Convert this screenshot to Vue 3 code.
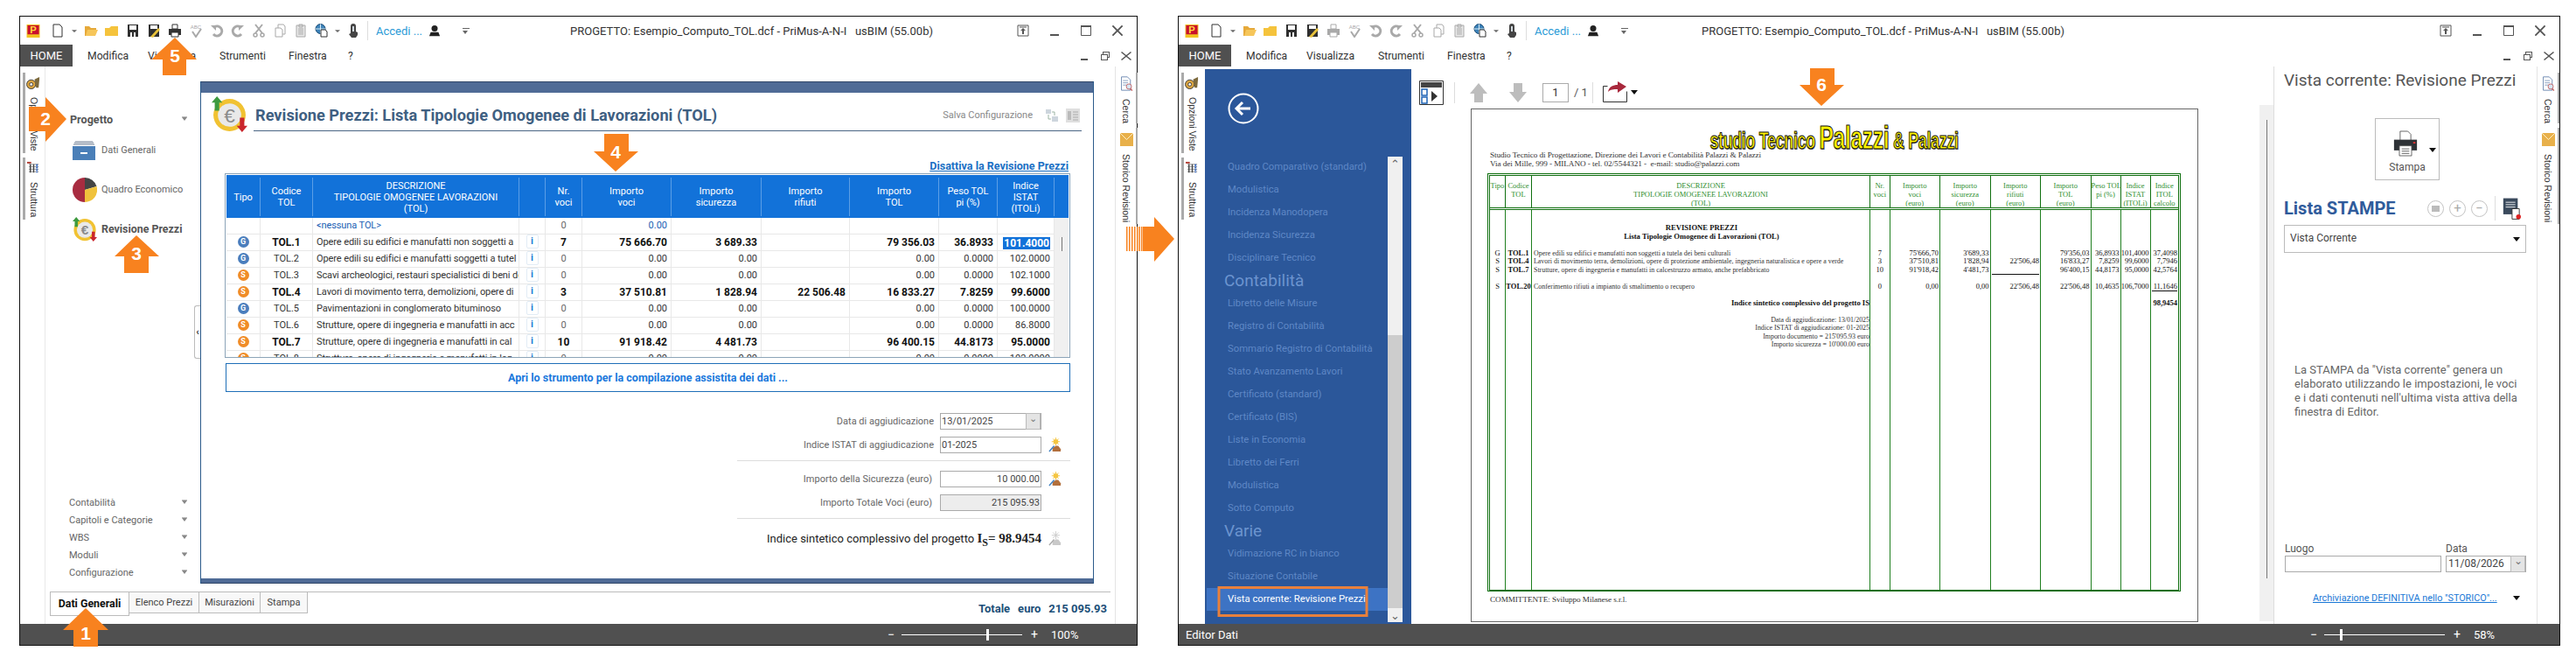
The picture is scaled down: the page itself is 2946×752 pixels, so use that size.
<script setup>
// Due finestre PriMus affiancate: la cornice e' comune, il corpo cambia
const windows = [
  { id: 'left', titleLeft: 629, status: '', zoom: '100%', thumb: 70, printMuted: false },
  { id: 'right', titleLeft: 598, status: 'Editor Dati', zoom: '58%', thumb: 13, printMuted: true }
]

const menu = [
  { label: 'Modifica', w: 69 },
  { label: 'Visualizza', w: 82 },
  { label: 'Strumenti', w: 79 },
  { label: 'Finestra', w: 68 },
  { label: '?', w: 12 }
]

const grey = '#a9a9a9'
const tools = [
  { id: 'doc', w: 32, shapes: [{ d: 'M3 1h7l3 3v11H3z', fill: '#fff', stroke: '#333' }] },
  { id: 'drop1', w: 6, small: true, shapes: [{ d: 'M0 6h16l-8 7z', fill: '#666' }] },
  { id: 'open', w: 24, gap: 4, shapes: [{ d: 'M1 3h5l2 2h6v2H5l-2 7H1z', fill: '#e6a93a' }, { d: 'M4 7h12l-3 7H2z', fill: '#f6c65a' }] },
  { id: 'folder', w: 24, shapes: [{ d: 'M0 5h5l2-2h8v11H0z', fill: '#f5c33c' }] },
  { id: 'save', w: 24, shapes: [{ d: 'M2 1h12v14H2z', fill: '#2f2f2f' }, { d: 'M4 2h8v5H4z', fill: '#fff' }, { d: 'M5 10h2v5H5zM9 10h2v5H9z', fill: '#fff' }] },
  { id: 'saveas', w: 24, shapes: [{ d: 'M2 1h12v14H2z', fill: '#2f2f2f' }, { d: 'M4 2h8v4H4z', fill: '#fff' }, { d: 'M4 15l9-10 2 2-8 9z', fill: '#e8c23a' }] },
  { id: 'print', w: 24, print: true, shapes: [{ d: 'M5 1h6v5H5z', fill: '#fff', stroke: 'currentColor' }, { d: 'M1 6h14v7H1z', fill: 'currentColor' }, { d: 'M4 10h8v5H4z', fill: '#fff', stroke: 'currentColor' }] },
  { id: 'abc', w: 24, label: 'ABC', shapes: [{ d: 'M4 9l4 6 6-9', fill: 'none', stroke: grey, sw: 2 }] },
  { id: 'undo', w: 24, shapes: [{ d: 'M5 4a5.5 5.5 0 1 1-1 8', fill: 'none', stroke: grey, sw: 3 }, { d: 'M1 2h6v6z', fill: grey }] },
  { id: 'redo', w: 24, shapes: [{ d: 'M11 4a5.5 5.5 0 1 0 1 8', fill: 'none', stroke: grey, sw: 3 }, { d: 'M15 2H9v6z', fill: grey }] },
  { id: 'cut', w: 24, shapes: [{ d: 'M4 1l8 10M12 1L4 11', fill: 'none', stroke: grey, sw: 2 }, { d: 'M2 13a2 2 0 1 0 4 0 2 2 0 1 0-4 0M10 13a2 2 0 1 0 4 0 2 2 0 1 0-4 0', fill: 'none', stroke: grey, sw: 1.5 }] },
  { id: 'copy', w: 24, shapes: [{ d: 'M6 1h6l2 2v9H6z', fill: '#fff', stroke: grey }, { d: 'M3 5h6l2 2v8H3z', fill: '#fff', stroke: grey }] },
  { id: 'paste', w: 24, shapes: [{ d: 'M3 2h10v13H3z', fill: '#e8e8e8', stroke: grey }, { d: 'M6 1h4v3H6zM5 6h6M5 8h6M5 10h6M5 12h6', fill: 'none', stroke: grey }] },
  { id: 'web', w: 24, shapes: [{ d: 'M1 6a5.5 5.5 0 1 0 11 0 5.5 5.5 0 1 0-11 0z', fill: '#3d82b8', stroke: '#1e4f78' }, { d: 'M1 6h11M6.500 .5v11', fill: 'none', stroke: '#d9edf7' }, { d: 'M7 7h5l2 2v6H7z', fill: '#fff', stroke: '#333' }] },
  { id: 'drop2', w: 12, small: true, shapes: [{ d: 'M0 6h16l-8 7z', fill: '#666' }] },
  { id: 'touch', w: 24, shapes: [{ d: 'M5 3a3 3 0 0 1 6 0v6l2 1v3l-2 3H6l-3-4 2-1z', fill: '#444' }, { d: 'M7 3h2v6H7z', fill: '#cfd7de' }] }
]

const tableRows = [
  { desc: '<nessuna TOL>', none: true, nr: '0', voci: '0.00' },
  { type: 'G', code: 'TOL.1', strong: true, desc: 'Opere edili su edifici e manufatti non soggetti a', nr: '7', voci: '75 666.70', sic: '3 689.33', tol: '79 356.03', peso: '36.8933', istat: '101.4000', selected: true },
  { type: 'G', code: 'TOL.2', desc: 'Opere edili su edifici e manufatti soggetti a tutel', nr: '0', voci: '0.00', sic: '0.00', tol: '0.00', peso: '0.0000', istat: '102.0000' },
  { type: 'S', code: 'TOL.3', desc: 'Scavi archeologici, restauri specialistici di beni de', nr: '0', voci: '0.00', sic: '0.00', tol: '0.00', peso: '0.0000', istat: '102.1000' },
  { type: 'S', code: 'TOL.4', strong: true, desc: 'Lavori di movimento terra, demolizioni, opere di', nr: '3', voci: '37 510.81', sic: '1 828.94', rif: '22 506.48', tol: '16 833.27', peso: '7.8259', istat: '99.6000' },
  { type: 'G', code: 'TOL.5', desc: 'Pavimentazioni in conglomerato bituminoso', nr: '0', voci: '0.00', sic: '0.00', tol: '0.00', peso: '0.0000', istat: '100.0000' },
  { type: 'S', code: 'TOL.6', desc: 'Strutture, opere di ingegneria e manufatti in acc', nr: '0', voci: '0.00', sic: '0.00', tol: '0.00', peso: '0.0000', istat: '86.8000' },
  { type: 'S', code: 'TOL.7', strong: true, desc: 'Strutture, opere di ingegneria e manufatti in cal', nr: '10', voci: '91 918.42', sic: '4 481.73', tol: '96 400.15', peso: '44.8173', istat: '95.0000' },
  { type: 'S', code: 'TOL.8', desc: 'Strutture, opere di ingegneria e manufatti in leg', nr: '0', voci: '0.00', sic: '0.00', tol: '0.00', peso: '0.0000', istat: '102.0000' }
]

const tableHead = [
  ['Tipo'], ['Codice', 'TOL'], ['DESCRIZIONE', 'TIPOLOGIE OMOGENEE LAVORAZIONI', '(TOL)'], [],
  ['Nr.', 'voci'], ['Importo', 'voci'], ['Importo', 'sicurezza'], ['Importo', 'rifiuti'],
  ['Importo', 'TOL'], ['Peso TOL', 'pi (%)'], ['Indice', 'ISTAT', '(ITOLi)']
]

const navBottom = ['Contabilità', 'Capitoli e Categorie', 'WBS', 'Moduli', 'Configurazione']
const bottomTabs = [
  { t: 'Elenco Prezzi', w: 80 },
  { t: 'Misurazioni', w: 70 },
  { t: 'Stampa', w: 54 }
]

const printMenu = [
  { t: 'Quadro Comparativo (standard)' }, { t: 'Modulistica' }, { t: 'Incidenza Manodopera' },
  { t: 'Incidenza Sicurezza' }, { t: 'Disciplinare Tecnico' }, { t: 'Contabilità', head: true },
  { t: 'Libretto delle Misure' }, { t: 'Registro di Contabilità' }, { t: 'Sommario Registro di Contabilità' },
  { t: 'Stato Avanzamento Lavori' }, { t: 'Certificato (standard)' }, { t: 'Certificato (BIS)' },
  { t: 'Liste in Economia' }, { t: 'Libretto dei Ferri' }, { t: 'Modulistica' }, { t: 'Sotto Computo' },
  { t: 'Varie', head: true }, { t: 'Vidimazione RC in bianco' }, { t: 'Situazione Contabile' },
  { t: 'Vista corrente: Revisione Prezzi', active: true }
]

const docHead = [
  ['Tipo'], ['Codice', 'TOL'], ['DESCRIZIONE', 'TIPOLOGIE OMOGENEE LAVORAZIONI', '(TOL)'], ['Nr.', 'voci'],
  ['Importo', 'voci', '(euro)'], ['Importo', 'sicurezza', '(euro)'], ['Importo', 'rifiuti', '(euro)'],
  ['Importo', 'TOL', '(euro)'], ['Peso TOL', 'pi (%)'], ['Indice', 'ISTAT', '(ITOLi)'], ['Indice', 'ITOL', 'calcolo']
]

// Una riga ogni 9.5px; la colonna descrizione ha allineamenti diversi per riga
const docLines = [
  { d: 'REVISIONE PREZZI', a: 'center', b: true },
  { d: 'Lista Tipologie Omogenee di Lavorazioni (TOL)', a: 'center', b: true },
  {},
  { v: ['G', 'TOL.1', 'Opere edili su edifici e manufatti non soggetti a tutela dei beni culturali', '7', "75'666,70", "3'689,33", '', "79'356,03", '36,8933', '101,4000', '37,4098'] },
  { v: ['S', 'TOL.4', 'Lavori di movimento terra, demolizioni, opere di protezione ambientale, ingegneria naturalistica e opere a verde', '3', "37'510,81", "1'828,94", "22'506,48", "16'833,27", '7,8259', '99,6000', '7,7946'] },
  { v: ['S', 'TOL.7', 'Strutture, opere di ingegneria e manufatti in calcestruzzo armato, anche prefabbricato', '10', "91'918,42", "4'481,73", '', "96'400,15", '44,8173', '95,0000', '42,5764'] },
  {},
  { v: ['S', 'TOL.20', 'Conferimento rifiuti a impianto di smaltimento o recupero', '0', '0,00', '0,00', "22'506,48", "22'506,48", '10,4635', '106,7000', '11,1646'] },
  {},
  { d: 'Indice sintetico complessivo del progetto IS', a: 'right', b: true, last: '98,9454' },
  {},
  { d: 'Data di aggiudicazione: 13/01/2025', a: 'right' },
  { d: 'Indice ISTAT di aggiudicazione: 01-2025', a: 'right' },
  { d: 'Importo documento = 215\'095.93 euro', a: 'right' },
  { d: 'Importo sicurezza = 10\'000.00 euro', a: 'right' }
]

function docCell(line, col) {
  if (line.v) return line.v[col]
  if (col === 2) return line.d
  if (col === 10) return line.last
  return ''
}

function docClass(line, col) {
  return {
    'doc-center': col < 2 || col === 3,
    'doc-right': col > 3,
    'doc-bold': line.b || (line.v && col === 1) || (line.last && col === 10),
    'doc-desc': col === 2,
    'doc-desc-center': col === 2 && line.a === 'center',
    'doc-desc-right': col === 2 && line.a === 'right',
    'doc-rule': (col === 6 && line.v && line.v[1] === 'TOL.7') || (col === 10 && line.v && line.v[1] === 'TOL.20')
  }
}

const pct = (v) => `${v}%`

// Frecce numerate del tutorial, coordinate della pagina
const orange = '#f8821f'
const arrows = [
  { n: '1', pts: '98,695 124,720 112,720 112,739 84,739 84,720 72,720', x: 98, y: 731 },
  { n: '2', pts: '76,136 52,111 52,122 33,122 33,150 52,150 52,162', x: 52, y: 143 },
  { n: '3', pts: '156,269 182,293 170,293 170,312 142,312 142,293 131,293', x: 156, y: 297 },
  { n: '4', pts: '704,196 730,173 719,173 719,153 691,153 691,173 679,173', x: 704, y: 181 },
  { n: '5', pts: '200,43 225,68 213,68 213,86 186,86 186,68 173,68', x: 200, y: 71 },
  { n: '6', pts: '2083,121 2109,97 2098,97 2098,78 2070,78 2070,97 2058,97', x: 2083, y: 104 }
]
const stripes = [1288, 1291, 1294, 1297, 1300, 1302.5, 1305]
</script>

<template>
  <div class="page">
    <svg class="defs" width="0" height="0" aria-hidden="true">
      <symbol id="euro" viewBox="0 0 40 40">
        <circle cx="20" cy="21" r="18" fill="#f1c232" />
        <circle cx="20" cy="21" r="13" fill="#e9e9e9" />
        <text x="20" y="29" text-anchor="middle" font-size="22" font-family="Liberation Sans, sans-serif" fill="#8a8a8a">€</text>
        <path d="M6 0l6 7H8.500v9h-5V7H0z" fill="#3d9a3f" />
        <path d="M34 40l-6-7h3.500v-9h5v9H40z" fill="#c9252c" />
      </symbol>
      <symbol id="wand" viewBox="0 0 16 18">
        <circle cx="9" cy="5" r="3" fill="#f4c542" />
        <path d="M9 0v10M4 5h10M5.500 1.500l7 7M12.500 1.500l-7 7" stroke="#f4c542" />
        <path d="M5 17v-4l4-3h3l3 4v3z" fill="#b26f3c" />
        <path d="M1 17l6-7" stroke="#3d7fc1" stroke-width="1.500" />
      </symbol>
      <symbol id="wand-off" viewBox="0 0 16 18">
        <path d="M9 0v10M4 5h10M5.500 1.500l7 7M12.500 1.500l-7 7" stroke="#ccc" />
        <path d="M5 17v-4l4-3h3l3 4v3z" fill="#c9c9c9" />
        <path d="M1 17l6-7" stroke="#aaa" stroke-width="1.500" />
      </symbol>
      <symbol id="options" viewBox="0 0 18 16">
        <circle cx="6" cy="10" r="5.500" fill="#d9a441" stroke="#3a3a3a" />
        <circle cx="6" cy="10" r="2" fill="#fff" stroke="#3a3a3a" />
        <path d="M10 4l6-3v3l-1 10h-3z" fill="#7d6a3d" />
      </symbol>
      <symbol id="structure" viewBox="0 0 16 16">
        <path d="M0 1h5v2H0z" fill="#b0392e" />
        <path d="M2 4h12M2 7h12M2 10h12M2 13h12" stroke="#999" />
        <path d="M4 4v10M8 4v10" stroke="#444" stroke-width="1.500" />
        <path d="M12 4v10" stroke="#2a62c4" stroke-width="2" stroke-dasharray="2 1" />
      </symbol>
      <symbol id="search-doc" viewBox="0 0 16 20">
        <path d="M1 1h8l4 4v14H1z" fill="#fff" stroke="#5d7ca8" />
        <path d="M3 6h7M3 9h7M3 12h5" stroke="#7b94b8" />
        <circle cx="11" cy="14" r="3.500" fill="#d5e6f6" stroke="#c05a5a" />
        <path d="M13 17l2.500 2.500" stroke="#c05a5a" stroke-width="1.500" />
      </symbol>
      <symbol id="mail" viewBox="0 0 16 16">
        <path d="M0 0h16v16H0z" fill="#e8b04a" />
        <path d="M0 0l8 8 8-8" fill="none" stroke="#fff3d0" />
      </symbol>
    </svg>

    <section v-for="win in windows" :key="win.id" class="window" :class="`window-${win.id}`">
      <!-- barra del titolo -->
      <header class="titlebar">
        <svg class="app-icon" viewBox="0 0 16 16">
          <path d="M0 0h16v16H0z" fill="#f2c320" />
          <path d="M1 1h14v11H1z" fill="#c8102e" />
          <text x="8" y="11" text-anchor="middle" font-size="12" font-weight="700" font-family="Liberation Sans, sans-serif" fill="#ffd83a">P</text>
        </svg>
        <div
          v-for="t in tools"
          :key="t.id"
          class="tool"
          :class="{ 'tool-ml': t.gap, 'tool-muted': t.print && win.printMuted }"
          :style="{ width: t.w + 'px' }"
        >
          <svg :class="t.small ? 'tool-small' : 'tool-svg'" viewBox="0 0 16 16">
            <text v-if="t.label" x="8" y="6" text-anchor="middle" font-size="6" font-family="Liberation Sans, sans-serif" :fill="grey">{{ t.label }}</text>
            <path
              v-for="(s, i) in t.shapes"
              :key="i"
              :d="s.d"
              :fill="s.fill"
              :stroke="s.stroke"
              :stroke-width="s.sw || 1"
            />
          </svg>
        </div>
        <span class="qa-sep"></span>
        <span class="login">Accedi ...</span>
        <svg class="user" viewBox="0 0 16 16">
          <circle cx="8" cy="5" r="4" fill="#222" />
          <path d="M1 15l2-5h10l2 5z" fill="#222" />
        </svg>
        <span class="qa">
          <i></i>
        </span>
        <span class="title-text" :style="{ left: win.titleLeft + 'px' }">PROGETTO: Esempio_Computo_TOL.dcf - PriMus-A-N-I &nbsp; usBIM (55.00b)</span>
        <div class="win-ctrls">
          <svg viewBox="0 0 14 14"><path d="M1 1h12v12H1zM3 3h8" fill="none" stroke="#555" /><path d="M7 4l-3 3h2v4h2V7h2z" fill="#555" /></svg>
          <svg viewBox="0 0 14 14"><path d="M2 11h10v2H2z" fill="#555" /></svg>
          <svg viewBox="0 0 14 14"><path d="M1.500 1.500h11v11h-11z" fill="none" stroke="#555" /><path d="M1 1h12v2H1z" fill="#555" /></svg>
          <svg viewBox="0 0 14 14"><path d="M2 1l5 5 5-5 1 1-5 5 5 5-1 1-5-5-5 5-1-1 5-5-5-5z" fill="#555" stroke="#555" stroke-width=".5" /></svg>
        </div>
      </header>

      <!-- menu -->
      <nav class="menubar">
        <span class="home">HOME</span>
        <span v-for="m in menu" :key="m.label" class="menu-item" :style="{ width: m.w + 'px' }">{{ m.label }}</span>
        <div class="doc-ctrls">
          <svg viewBox="0 0 12 12"><path d="M2 9h8v2H2z" fill="#555" /></svg>
          <svg viewBox="0 0 12 12"><path d="M3 1h8v7H9v3H1V4h2zM4 4h5v3h1V2H4zM2 5v5h6V5z" fill="#555" /></svg>
          <svg viewBox="0 0 12 12"><path d="M1 1l5 4 5-4 1 1-5 4 5 4-1 1-5-4-5 4-1-1 5-4-5-4z" fill="#555" /></svg>
        </div>
      </nav>

      <div class="body">
        <aside class="vtabs">
          <div class="vtab vtab-a">
            <svg class="vtab-icon"><use href="#options" /></svg>
            <span class="vtab-text">Opzioni Viste</span>
          </div>
          <div class="vtab vtab-b">
            <svg class="vtab-icon"><use href="#structure" /></svg>
            <span class="vtab-text">Struttura</span>
          </div>
        </aside>

        <!-- finestra sinistra: editor dati -->
        <div v-if="win.id === 'left'" class="main">
          <div class="workarea">
            <div class="nav">
              <div class="nav-head">
                <span>Progetto</span><i class="caret"></i>
              </div>
              <div class="nav-item">
                <span class="nav-icon">
                  <svg width="26" height="22" viewBox="0 0 26 22">
                    <path d="M3 0h20M2 2h22M1 4h24" stroke="#6b7a90" fill="none" />
                    <path d="M0 6h26v16H0z" fill="#4a7fb8" />
                    <path d="M9 13h8v2H9z" fill="#fff" />
                  </svg>
                </span>
                <span>Dati Generali</span>
              </div>
              <div class="nav-item">
                <span class="nav-icon">
                  <svg width="28" height="28" viewBox="0 0 28 28">
                    <path d="M14 14V0a14 14 0 0 1 13.500 10z" fill="#444" />
                    <path d="M14 14l13.500-4A14 14 0 0 1 14 28z" fill="#f0c23c" />
                    <path d="M14 14v14A14 14 0 0 1 14 0z" fill="#a82c40" />
                  </svg>
                </span>
                <span>Quadro Economico</span>
              </div>
              <div class="nav-item nav-active">
                <span class="nav-icon">
                  <svg width="28" height="28"><use href="#euro" /></svg>
                </span>
                <span>Revisione Prezzi</span>
              </div>
              <div class="nav-bottom">
                <div v-for="n in navBottom" :key="n" class="nav-row">
                  <span>{{ n }}</span><i class="caret"></i>
                </div>
              </div>
              <div class="collapse"><span>‹</span></div>
            </div>

            <article class="card">
              <div class="band"></div>
              <div class="card-body">
                <div class="card-title">
                  <svg class="title-icon"><use href="#euro" /></svg>
                  <div class="title-line">
                    <h1>Revisione Prezzi: Lista Tipologie Omogenee di Lavorazioni (TOL)</h1>
                    <span class="save-cfg">Salva Configurazione</span>
                    <svg class="cfg-icon" viewBox="0 0 16 16">
                      <path d="M1 1h6v5H1zM8 9h7v6H8z" fill="#cdd5dd" />
                      <path d="M4 7v5h3M11 8V4H8" fill="none" stroke="#9bb3a3" />
                    </svg>
                    <svg class="cfg-icon" viewBox="0 0 16 16">
                      <path d="M0 0h16v16H0z" fill="#dfdfdf" />
                      <path d="M2 3h4v10H2z" fill="#bbb" />
                      <path d="M8 4h6M8 7h6M8 10h6M8 13h6" stroke="#aaa" />
                    </svg>
                  </div>
                </div>

                <div class="link-row"><a class="disable">Disattiva la Revisione Prezzi</a></div>

                <div class="tol-table">
                  <div class="tol-row tol-head">
                    <div v-for="(h, i) in tableHead" :key="i" class="th">
                      <span v-for="l in h" :key="l">{{ l }}</span>
                    </div>
                  </div>
                  <div
                    v-for="r in tableRows"
                    :key="r.desc"
                    class="tol-row tol-data"
                    :class="{ strong: r.strong }"
                  >
                    <div class="td td-c">
                      <span v-if="r.type" class="coin" :class="r.type === 'G' ? 'coin-g' : 'coin-s'">{{ r.type }}</span>
                    </div>
                    <div class="td td-c td-code">{{ r.code }}</div>
                    <div class="td td-desc" :class="{ 'td-none': r.none }">{{ r.desc }}</div>
                    <div class="td td-c"><span v-if="r.type" class="info">i</span></div>
                    <div class="td td-c" :class="{ 'td-zero': !r.strong }">{{ r.nr }}</div>
                    <div class="td td-r" :class="{ 'td-none': r.none }">{{ r.voci }}</div>
                    <div class="td td-r">{{ r.sic }}</div>
                    <div class="td td-r">{{ r.rif }}</div>
                    <div class="td td-r">{{ r.tol }}</div>
                    <div class="td td-r">{{ r.peso }}</div>
                    <div class="td td-r">
                      <span :class="{ selected: r.selected }">{{ r.istat }}</span>
                    </div>
                  </div>
                  <div class="tol-scroll"><i></i></div>
                </div>

                <button type="button" class="assist">Apri lo strumento per la compilazione assistita dei dati ...</button>

                <div class="form">
                  <div class="form-row">
                    <label class="wide">Data di aggiudicazione</label>
                    <div class="field"><span>13/01/2025</span><b class="field-arrow">⌄</b></div>
                    <span class="wand-cell"></span>
                  </div>
                  <div class="form-row">
                    <label class="wide">Indice ISTAT di aggiudicazione</label>
                    <div class="field"><span>01-2025</span></div>
                    <span class="wand-cell"><svg class="wand"><use href="#wand" /></svg></span>
                  </div>
                  <div class="form-sep"></div>
                  <div class="form-row">
                    <label>Importo della Sicurezza (euro)</label>
                    <div class="field field-r"><span>10 000.00</span></div>
                    <span class="wand-cell"><svg class="wand"><use href="#wand" /></svg></span>
                  </div>
                  <div class="form-row">
                    <label>Importo Totale Voci (euro)</label>
                    <div class="field field-r field-off"><span>215 095.93</span></div>
                    <span class="wand-cell"></span>
                  </div>
                  <div class="form-sep"></div>
                  <div class="form-total">
                    <span>Indice sintetico complessivo del progetto <b class="is">I<sub>S</sub>= 98.9454</b></span>
                    <span class="wand-cell"><svg class="wand"><use href="#wand-off" /></svg></span>
                  </div>
                </div>
              </div>
              <div class="band band-bottom"></div>
            </article>
          </div>

          <div class="sheet-tabs">
            <span class="sheet sheet-active">Dati Generali</span>
            <span v-for="s in bottomTabs" :key="s.t" class="sheet" :style="{ width: s.w + 'px' }">{{ s.t }}</span>
            <span class="total"><b>Totale</b><b>euro</b><b>215 095.93</b></span>
          </div>
        </div>

        <!-- finestra destra: anteprima di stampa -->
        <div v-else class="main main-print">
          <div class="print-menu">
            <div class="back">
              <svg width="36" height="36" viewBox="0 0 36 36">
                <circle cx="18" cy="18" r="16.500" fill="none" stroke="#fff" stroke-width="2" />
                <path d="M10 18h16M17 11l-7 7 7 7" fill="none" stroke="#fff" stroke-width="3" />
              </svg>
            </div>
            <ul class="pm-list">
              <li v-for="(p, i) in printMenu" :key="i" :class="{ 'pm-head': p.head, 'pm-active': p.active }">{{ p.t }}</li>
            </ul>
            <div class="pm-scroll">
              <span class="pm-up">⌃</span>
              <i></i>
              <span class="pm-down">⌄</span>
            </div>
          </div>

          <div class="preview">
            <div class="pv-bar">
              <svg class="pv-toggle" viewBox="0 0 28 28">
                <path d="M.5 .5h27v27H.5z" fill="#fff" stroke="#333" />
                <path d="M2 2h24v6H2z" fill="#444" />
                <path d="M3 10h6v7H3zM3 19h6v7H3z" fill="#fff" stroke="#1e63b5" stroke-width="1.500" />
                <path d="M14 12l7 6-7 6z" fill="#333" />
              </svg>
              <span class="pv-sep"></span>
              <svg class="pv-arrow" viewBox="0 0 20 22"><path d="M10 0l10 12h-5v10H5V12H0z" fill="#bdbdbd" /></svg>
              <svg class="pv-arrow pv-down" viewBox="0 0 20 22"><path d="M10 22l10-12h-5V0H5v10H0z" fill="#bdbdbd" /></svg>
              <span class="pv-page">1</span>
              <span class="pv-of">/ 1</span>
              <span class="pv-sep pv-sep2"></span>
              <svg class="pv-export" viewBox="0 0 28 24">
                <path d="M.5 5.500h5M.5 5.500v18h27v-12" fill="none" stroke="#333" />
                <path d="M6 12c1-6 6-8 11-8V0l10 6-10 7V9c-5 0-8 0-11 3z" fill="#a8283c" />
              </svg>
              <i class="pv-drop"></i>
            </div>

            <div class="sheet-page">
              <div class="logo">
                <span class="logo-inner">studio Tecnico <span class="logo-big">Palazzi</span> <small>&amp; Palazzi</small></span>
              </div>
              <p class="addr">Studio Tecnico di Progettazione, Direzione dei Lavori e Contabilità Palazzi &amp; Palazzi</p>
              <p class="addr">Via dei Mille, 999 - MILANO - tel. 02/5544321 -&nbsp; e-mail: studio@palazzi.com</p>

              <div class="doc-table">
                <div class="doc-grid doc-head">
                  <div v-for="(h, i) in docHead" :key="i" class="doc-th">
                    <span v-for="l in h" :key="l">{{ l }}</span>
                  </div>
                </div>
                <div class="doc-grid doc-body">
                  <div v-for="(h, col) in docHead" :key="col" class="doc-col">
                    <div v-for="(line, i) in docLines" :key="i" class="doc-line" :class="docClass(line, col)">{{ docCell(line, col) }}</div>
                  </div>
                </div>
              </div>
              <p class="addr committente">COMMITTENTE: Sviluppo Milanese s.r.l.</p>
            </div>
          </div>

          <div class="pv-scroll"><i></i></div>

          <aside class="side">
            <h2>Vista corrente: Revisione Prezzi</h2>
            <div class="stampa-btn">
              <svg viewBox="0 0 32 34">
                <path d="M9 1h10l4 4v9H9z" fill="#fff" stroke="#555" />
                <path d="M1 12h30v14H1z" fill="#2e3236" />
                <path d="M26 15h3v2h-3z" fill="#e33" />
                <path d="M8 20h16v13H8z" fill="#fff" stroke="#555" />
                <path d="M11 24h10M11 27h10M11 30h10" stroke="#555" />
              </svg>
              <i class="stampa-drop"></i>
              <span>Stampa</span>
            </div>
            <div class="list-head">
              <strong>Lista STAMPE</strong>
              <span class="round"><i class="round-doc"></i></span>
              <span class="round">+</span>
              <span class="round">−</span>
              <span class="list-sep"></span>
              <svg class="list-icon" viewBox="0 0 24 26">
                <path d="M2 0h18v20H2z" fill="#3a4a5c" />
                <path d="M5 5h12M5 8h12M5 11h12" stroke="#fff" />
                <path d="M13 13h9v13h-9z" fill="#fff" stroke="#333" />
                <circle cx="21" cy="23" r="3" fill="#d22" />
              </svg>
            </div>
            <div class="select"><span>Vista Corrente</span><i class="pv-drop"></i></div>
            <p class="note">La STAMPA da "Vista corrente" genera un elaborato utilizzando le impostazioni, le voci e i dati contenuti nell'ultima vista attiva della finestra di Editor.</p>
            <div class="place">
              <div class="place-l">
                <label>Luogo</label>
                <div class="field"></div>
              </div>
              <div class="place-r">
                <label>Data</label>
                <div class="field"><span>11/08/2026</span><b class="field-arrow">⌄</b></div>
              </div>
            </div>
            <div class="archive"><a>Archiviazione DEFINITIVA nello "STORICO"...</a><i class="pv-drop"></i></div>
          </aside>
        </div>

        <aside class="vtabs vtabs-right">
          <div class="vtab vtab-c">
            <svg class="vtab-icon vtab-doc"><use href="#search-doc" /></svg>
            <span class="vtab-text">Cerca</span>
          </div>
          <div class="vtab vtab-d">
            <svg class="vtab-icon"><use href="#mail" /></svg>
            <span class="vtab-text">Storico Revisioni</span>
          </div>
        </aside>
      </div>

      <footer class="statusbar">
        <span>{{ win.status }}</span>
        <div class="zoom">
          <span class="z-btn">−</span>
          <div class="z-track"><i :style="{ left: pct(win.thumb) }"></i></div>
          <span class="z-btn z-plus">+</span>
          <span class="z-val">{{ win.zoom }}</span>
        </div>
      </footer>
    </section>

    <!-- frecce e riquadro del tutorial, sopra le finestre -->
    <svg class="overlay" viewBox="0 0 2946 752">
      <g v-for="a in arrows" :key="a.n">
        <polygon :points="a.pts" :fill="orange" />
        <text :x="a.x" :y="a.y" class="arrow-num">{{ a.n }}</text>
      </g>
      <rect v-for="s in stripes" :key="s" :x="s" y="259" width="1.500" height="28" :fill="orange" />
      <polygon points="1307,259 1320,259 1320,248 1343,273 1320,299 1320,287 1307,287" :fill="orange" />
      <rect x="1394" y="671.500" width="169" height="32" fill="none" stroke="#e8803c" stroke-width="3" />
    </svg>
  </div>
</template>

<style>
html, body { margin: 0; background: #fff; }
</style>

<style scoped>
.page {
  position: relative;
  width: 2946px;
  height: 752px;
  overflow: hidden;
  display: flex;
  gap: 46px;
  padding: 18px 0 0 22px;
  box-sizing: border-box;
  background: #fff;
  font-family: Roboto, "Liberation Sans", sans-serif;
  font-size: 12px;
  color: #333;
}
.defs { position: absolute; }
.overlay { position: absolute; left: 0; top: 0; width: 2946px; height: 752px; pointer-events: none; }
.arrow-num { fill: #fff; font: 700 21px "Liberation Sans", sans-serif; text-anchor: middle; }

/* cornice finestra */
.window {
  height: 720px;
  border: 1px solid #111;
  box-sizing: border-box;
  display: flex;
  flex-direction: column;
  flex: none;
  background: #fff;
}
.window-left { width: 1279px; }
.window-right { width: 1581px; }

.titlebar {
  position: relative;
  height: 32px;
  display: flex;
  align-items: center;
  padding-left: 7px;
  flex: none;
}
.app-icon { width: 16px; height: 15px; margin-right: 4px; }
.tool { display: flex; justify-content: center; align-items: center; height: 20px; flex: none; color: #333; }
.tool-ml { margin-left: 4px; }
.tool-muted { color: #a9a9a9; }
.tool-svg { width: 16px; height: 16px; flex: none; }
.tool-small { width: 6px; height: 6px; flex: none; }
.qa-sep { width: 1px; height: 22px; background: #ddd; margin-left: 4px; }
.login { color: #2a9ad6; font-size: 13px; margin-left: 9px; width: 52px; white-space: nowrap; }
.user { width: 14px; height: 14px; margin-left: 8px; }
.qa { width: 8px; height: 6px; margin-left: 25px; border-top: 1px solid #666; }
.qa i { display: block; width: 0; height: 0; margin-top: 2px; border: 3px solid transparent; border-top: 4px solid #666; border-bottom: 0; }
.title-text { position: absolute; top: 9px; font-size: 13px; line-height: 15px; color: #333; white-space: nowrap; }
.win-ctrls { margin-left: auto; display: flex; padding-right: 15px; gap: 22px; }
.win-ctrls svg { width: 14px; height: 14px; }

.menubar { height: 25px; display: flex; align-items: center; flex: none; position: relative; }
.home {
  width: 60px;
  height: 25px;
  line-height: 25px;
  text-align: center;
  background: #505050;
  color: #fff;
  font-size: 13px;
  margin-right: 17px;
}
.menu-item { font-size: 12.2px; white-space: nowrap; }
.doc-ctrls { margin-left: auto; display: flex; gap: 12px; padding-right: 6px; }
.doc-ctrls svg { width: 12px; height: 12px; }

.body { flex: 1; display: flex; min-height: 0; }

/* schede verticali */
.vtabs { width: 28px; flex: none; padding-top: 7px; box-sizing: border-box; }
.window-right .vtabs:first-child { width: 30px; }
.vtab { display: flex; flex-direction: column; align-items: center; border-left: 3px solid #aaa; margin-left: 3px; box-sizing: border-box; width: 22px; }
.vtab-a { height: 92px; margin-bottom: 5px; }
.vtab-b { height: 71px; }
.vtab-icon { width: 17px; height: 15px; margin-top: 4px; flex: none; }
.vtab-text {
  writing-mode: vertical-rl;
  font: 10.5px/12px "Liberation Sans", sans-serif;
  color: #333;
  margin-top: 9px;
  white-space: nowrap;
}
.vtabs-right { width: 27px; border-left: 1px solid #e4e4e4; }
.vtabs-right .vtab { border-left: 0; border-right: 2px solid #aaa; margin-left: 1px; width: 24px; }
.vtab-c { height: 58px; margin-bottom: 5px; }
.vtab-d { height: 110px; }
.vtab-doc { height: 17px; }
.vtab-d .vtab-icon { margin-top: 6px; }

/* editor */
.main { width: 1224px; flex: none; border-left: 1px solid #e8e8e8; box-sizing: border-box; display: flex; flex-direction: column; }
.workarea { height: 600px; display: flex; flex: none; }
.nav { width: 177px; flex: none; display: flex; flex-direction: column; padding: 50px 15px 12px 27px; box-sizing: border-box; position: relative; color: #666; font-size: 11px; }
.nav-head { height: 20px; display: flex; align-items: center; justify-content: space-between; font-weight: 700; font-size: 12.6px; color: #555; margin-left: 1px; margin-bottom: 3px; }
.nav-item { height: 45px; display: flex; align-items: center; margin-left: 5px; white-space: nowrap; }
.nav-icon { width: 33px; flex: none; display: flex; align-items: center; margin-left: -1px; }
.nav-active { font-weight: 700; font-size: 12.4px; color: #555; }
.nav-bottom { margin-top: auto; }
.nav-row { height: 20px; display: flex; align-items: center; justify-content: space-between; color: #666; }
.caret { width: 0; height: 0; border: 3px solid transparent; border-top: 4px solid #888; border-bottom: 0; box-shadow: 0 -1px 0 0 #bbb; }
.collapse {
  position: absolute;
  right: 0;
  top: 273px;
  width: 6px;
  height: 59px;
  border: 1px solid #bbb;
  border-right: 0;
  border-radius: 3px 0 0 3px;
  background: #fff;
  display: flex;
  align-items: center;
  justify-content: center;
  font-weight: 700;
  color: #222;
}

.card {
  width: 1022px;
  height: 574px;
  margin-top: 17px;
  flex: none;
  display: flex;
  flex-direction: column;
  border-left: 1px solid #2b5a8a;
  border-right: 1px solid #2b5a8a;
  box-sizing: border-box;
}
.band { height: 13px; background: #4f6b96; border-top: 1px solid #2f4668; box-sizing: border-box; flex: none; }
.band-bottom { height: 6px; border-top: 0; border-bottom: 1px solid #2f4668; }
.card-body { flex: 1; padding: 0 26px 0 27px; min-height: 0; }
.card-title { display: flex; height: 45px; position: relative; }
.title-icon { width: 41px; height: 41px; margin: 4px 7px 0 -15px; flex: none; }
.title-line {
  flex: 1;
  margin-right: -13px;
  display: flex;
  align-items: center;
  border-bottom: 1px solid #4a6583;
  height: 44px;
  padding: 0 2px;
  box-sizing: border-box;
}
.title-line h1 { margin: 8px 0 0; font-size: 18.2px; font-weight: 700; color: #3f6082; flex: 1; white-space: nowrap; }
.save-cfg { color: #888; font-size: 11px; margin: 8px 6px 0 0; white-space: nowrap; }
.cfg-icon { width: 16px; height: 16px; margin: 8px 0 0 8px; flex: none; }
.link-row { height: 47px; box-sizing: border-box; padding: 31px 2px 0 0; text-align: right; }
.disable { color: #1a6fc4; font-weight: 700; font-size: 12.5px; text-decoration: underline; line-height: 16px; display: block; }

/* tabella */
.tol-table {
  position: relative;
  height: 211px;
  overflow: hidden;
  border: 1px solid #8ca4b8;
  padding: 1px;
  box-sizing: border-box;
}
.tol-row { display: grid; grid-template-columns: 39px 60px 236px 30px 42px 102px 103px 101px 102px 67px 65px; }
.tol-head { height: 49px; background: #1272d9; color: #fff; text-align: center; }
.th { display: flex; flex-direction: column; justify-content: center; line-height: 13px; border-right: 1px solid #5b9ee6; margin: 3px 0 2px; white-space: nowrap; font-size: 11px; }
.tol-data { height: 19px; font-size: 11px; }
.td { height: 19px; line-height: 18px; border-right: 1px solid #e8e8e8; border-bottom: 1px solid #e8e8e8; box-sizing: border-box; overflow: hidden; white-space: nowrap; }
.td-c { text-align: center; }
.td-r { text-align: right; padding-right: 4px; }
.td-desc { padding-left: 4px; letter-spacing: -0.1px; }
.td-none { color: #1a5fb4; }
.td-zero { color: #666; }
.strong .td-code, .strong .td-r, .strong .td-c:nth-child(5) { font-weight: 700; color: #111; font-size: 12px; }
.coin { display: inline-block; width: 13px; height: 13px; line-height: 13px; border-radius: 50%; color: #fff; font-size: 9px; font-weight: 700; vertical-align: 1px; }
.coin-g { background: #4a7ebd; }
.coin-s { background: #f08c28; }
.info { display: inline-block; width: 12px; height: 14px; line-height: 14px; color: #1c7cd6; font-weight: 700; border: 1px solid #e2ecf5; border-radius: 2px; vertical-align: 1px; }
.selected { display: inline-block; background: #1272d9; color: #fff; line-height: 14px; padding: 0 1px; margin-top: 3px; font-weight: 700; }
.tol-scroll { position: absolute; right: 1px; top: 50px; bottom: 0; width: 16px; background: #f0f0f0; }
.tol-scroll i { position: absolute; left: 8px; top: 22px; width: 1px; height: 16px; background: #777; }

.assist {
  display: block;
  width: 966px;
  height: 33px;
  margin: 6px 0 24px 1px;
  border: 1px solid #1e6fb8;
  background: #fff;
  color: #1a78dc;
  font: 700 12.5px Roboto, "Liberation Sans", sans-serif;
  padding: 0;
}
.form { width: 381px; margin-left: auto; color: #666; font-size: 11px; }
.form-row { display: flex; justify-content: flex-end; align-items: center; height: 19px; margin-bottom: 8px; }
.form-row label { white-space: nowrap; margin-right: 9px; }
.form-row label.wide { margin-right: 7px; }
.field { position: relative; width: 116px; height: 19px; border: 1px solid #aaa; box-sizing: border-box; line-height: 17px; padding: 0 1px; color: #444; white-space: nowrap; background: #fff; }
.field-r { text-align: right; }
.field-off { background: #ededed; }
.field-arrow { position: absolute; right: 0; top: -1px; width: 17px; height: 19px; background: #e4e4e4; border: 1px solid #bbb; box-sizing: border-box; color: #777; text-align: center; line-height: 11px; font-weight: 400; }
.wand-cell { width: 33px; flex: none; display: flex; justify-content: center; padding-right: 2px; box-sizing: border-box; }
.wand { width: 15px; height: 17px; }
.form-sep { height: 1px; background: #ddd; margin: 4px 0 11px; }
.form-total { display: flex; justify-content: flex-end; align-items: center; height: 22px; margin-top: 8px; font-size: 13px; color: #222; white-space: nowrap; }
.is { font-family: "Liberation Serif", serif; font-weight: 700; font-size: 15px; }
.is sub { font-size: 12px; line-height: 0; }

/* schede in basso */
.sheet-tabs { height: 38px; display: flex; flex: none; margin: 0 5px; position: relative; align-items: flex-start; border-top: 1px solid #bbb; box-sizing: border-box; font-size: 11px; }
.sheet { height: 24px; line-height: 23px; text-align: center; border: 1px solid #bbb; border-top: 0; border-left: 0; background: #f8f8f8; box-sizing: border-box; color: #444; white-space: nowrap; }
.sheet-active { width: 91px; height: 27px; margin-top: 0; border-left: 1px solid #bbb; background: #fff; font-weight: 700; color: #111; line-height: 26px; font-size: 12.4px; }
.total { margin-left: auto; padding: 11px 4px 0 0; display: flex; gap: 9px; color: #1c4f78; font-size: 13px; line-height: 16px; white-space: nowrap; }

/* anteprima stampa */
.main-print { width: 1523px; flex-direction: row; border-left: 0; }
.print-menu {
  position: relative;
  width: 236px;
  height: 634px;
  margin-top: 3px;
  flex: none;
  background: #2b579a;
  box-sizing: border-box;
}
.back { height: 99px; padding: 27px 0 0 26px; box-sizing: border-box; }
.pm-list { list-style: none; margin: 0 0 0 2px; padding: 0; width: 207px; font-size: 11.3px; color: #5f88c6; }
.pm-list li { height: 26px; line-height: 26px; padding-left: 24px; white-space: nowrap; overflow: hidden; }
.pm-list .pm-head { font-size: 19px; padding-left: 20px; color: #6c94cf; }
.pm-list .pm-active { background: #3d73c4; color: #fff; }
.pm-scroll { position: absolute; left: 209px; top: 100px; width: 17px; bottom: 2px; display: flex; flex-direction: column; background: #f0f0f0; color: #666; text-align: center; }
.pm-up, .pm-down { height: 16px; line-height: 18px; font-size: 13px; flex: none; }
.pm-up { height: 204px; }
.pm-scroll i { flex: 1; background: #cdcdcd; }

.preview { width: 970px; flex: none; display: flex; flex-direction: column; margin-top: 3px; }
.pv-bar { height: 45px; display: flex; align-items: center; padding-left: 9px; box-sizing: border-box; flex: none; position: relative; }
.pv-toggle { width: 28px; height: 28px; margin-top: 8px; }
.pv-sep { width: 1px; height: 24px; margin: 8px 17px 0 12px; background: #ddd; }
.pv-arrow { width: 20px; height: 22px; margin-top: 8px; }
.pv-down { margin-left: 25px; }
.pv-page { width: 30px; height: 22px; margin: 8px 0 0 18px; border: 1px solid #aaa; box-sizing: border-box; text-align: center; line-height: 20px; font-size: 13px; }
.pv-of { margin: 8px 0 0 6px; font-size: 13px; color: #555; width: 18px; white-space: nowrap; }
.pv-sep2 { margin: 8px 11px 0 3px; }
.pv-export { width: 28px; height: 24px; margin-top: 6px; }
.pv-drop { display: inline-block; width: 0; height: 0; border: 4px solid transparent; border-top: 5px solid #111; border-bottom: 0; flex: none; }
.pv-bar .pv-drop { margin: 8px 0 0 4px; }

.sheet-page {
  width: 832px;
  height: 587px;
  margin-left: 68px;
  border: 1px solid #666;
  box-sizing: border-box;
  padding: 18px 0 0 21px;
  font-family: "Liberation Serif", serif;
  font-size: 7.5px;
  color: #333;
}
.logo { height: 29px; margin-left: -21px; text-align: center; white-space: nowrap; }
.logo-inner {
  display: inline-block;
  font: 700 24px/29px "Liberation Sans", sans-serif;
  letter-spacing: -0.5px;
  color: #fff200;
  -webkit-text-stroke: 1px #111;
  text-shadow: 1px 1px 0 #777;
  transform: scale(0.75, 1.12);
}
.logo-big { font-size: 33px; }
.logo-inner small { font-size: 24px; }
.addr { margin: 0; height: 10px; line-height: 10px; white-space: nowrap; font-size: 9.2px; letter-spacing: -0.06px; }

.doc-table {
  width: 793px;
  height: 478px;
  margin: 6px 0 4px -3px;
  border: 3px double #0f6f0f;
  border-bottom: 2px solid #0f6f0f;
  box-sizing: border-box;
  display: flex;
  flex-direction: column;
  color: #333;
}
.doc-grid { display: grid; grid-template-columns: 18px 30px 387px 22.5px 57.5px 57.5px 57.5px 57.5px 34px 34px 1fr; }
.doc-head { height: 36px; flex: none; border-bottom: 3px double #0f6f0f; box-sizing: content-box; }
.doc-th { display: flex; flex-direction: column; padding-top: 6px; line-height: 10px; text-align: center; color: #2f8f2f; border-right: 1px solid #0f6f0f; white-space: nowrap; box-sizing: border-box; font-size: 8.5px; }
.doc-body { flex: 1; min-height: 0; }
.doc-col { border-right: 1px solid #1f7f1f; padding-top: 16px; min-width: 0; box-sizing: border-box; }
.doc-th:last-child, .doc-col:last-child { border-right: 0; }
.doc-line { height: 9.5px; line-height: 9.5px; white-space: nowrap; font-size: 8.5px; color: #111; }
.doc-center { text-align: center; }
.doc-right { text-align: right; padding-right: 1px; }
.doc-bold { font-weight: 700; color: #111; }
.doc-desc { font-size: 7.9px; color: #333; padding-left: 2px; }
.doc-desc.doc-bold { color: #111; font-size: 8.6px; }
.doc-desc-center { text-align: center; }
.doc-desc-right { text-align: right; }
.doc-rule { position: relative; }
.doc-rule::after { content: ""; position: absolute; left: 1px; right: 1px; bottom: -1px; height: 1px; background: #111; }
.committente { margin-top: 3px; }

.pv-scroll { width: 16px; height: 590px; margin-top: 44px; flex: none; background: #f0f0f0; position: relative; }
.pv-scroll i { position: absolute; left: 8px; top: 17px; bottom: 49px; width: 1px; background: #777; }

.side { width: 301px; flex: none; border-left: 1px solid #ddd; padding: 3px 12px 0 11px; box-sizing: border-box; position: relative; color: #666; }
.side h2 { margin: 0; height: 26px; line-height: 26px; font-size: 19px; font-weight: 400; color: #555; white-space: nowrap; }
.stampa-btn { position: relative; width: 74px; height: 71px; margin: 30px 0 0 104px; border: 1px solid #bbb; box-sizing: border-box; text-align: center; }
.stampa-btn svg { display: block; width: 28px; height: 30px; margin: 13px 0 0 20px; }
.stampa-btn span { display: block; margin-top: 5px; color: #555; }
.stampa-drop { position: absolute; left: 61px; top: 33px; width: 0; height: 0; border: 4px solid transparent; border-top: 5px solid #111; border-bottom: 0; }
.list-head { display: flex; align-items: center; height: 28px; margin-top: 18px; }
.list-head strong { width: 164px; font-size: 20px; font-weight: 700; color: #2f5b9b; white-space: nowrap; }
.round { width: 19px; height: 19px; margin-right: 6px; line-height: 17px; border: 1px solid #c4c4c4; border-radius: 50%; box-sizing: border-box; color: #aaa; text-align: center; font-size: 15px; display: flex; align-items: center; justify-content: center; flex: none; }
.round-doc { width: 9px; height: 7px; background: #bbb; }
.list-sep { width: 1px; height: 28px; background: #ddd; margin-left: 2px; }
.list-icon { width: 22px; height: 25px; margin-left: 7px; }
.select { display: flex; justify-content: space-between; align-items: center; width: 277px; height: 32px; margin-top: 5px; padding: 0 6px; border: 1px solid #bbb; box-sizing: border-box; color: #444; font-size: 12px; }
.select span { margin-top: -3px; }
.note { margin: 126px 0 0 12px; width: 256px; line-height: 16px; font-size: 13px; color: #666; }
.place { position: absolute; left: 12px; top: 543px; display: flex; gap: 5px; }
.place label { display: block; height: 16px; line-height: 16px; color: #555; }
.place-l .field { width: 179px; }
.place-r .field { width: 92px; padding-left: 2px; }
.archive { position: absolute; left: 44px; top: 601px; display: flex; align-items: center; gap: 8px; white-space: nowrap; }
.archive a { color: #1a78d6; text-decoration: underline; font-size: 10.8px; width: 221px; }

/* barra di stato */
.statusbar { height: 24px; flex: none; background: #505050; color: #fff; display: flex; align-items: center; justify-content: space-between; padding: 0 0 0 8px; font-size: 13px; box-sizing: border-box; }
.zoom { display: flex; align-items: center; width: 285px; }
.z-btn { width: 16px; font-size: 14px; }
.z-track { position: relative; width: 138px; height: 1px; background: #fff; }
.z-track i { position: absolute; top: -6px; width: 3px; height: 13px; background: #fff; }
.z-plus { margin-left: 10px; margin-right: 7px; }
.z-val { white-space: nowrap; }
</style>
